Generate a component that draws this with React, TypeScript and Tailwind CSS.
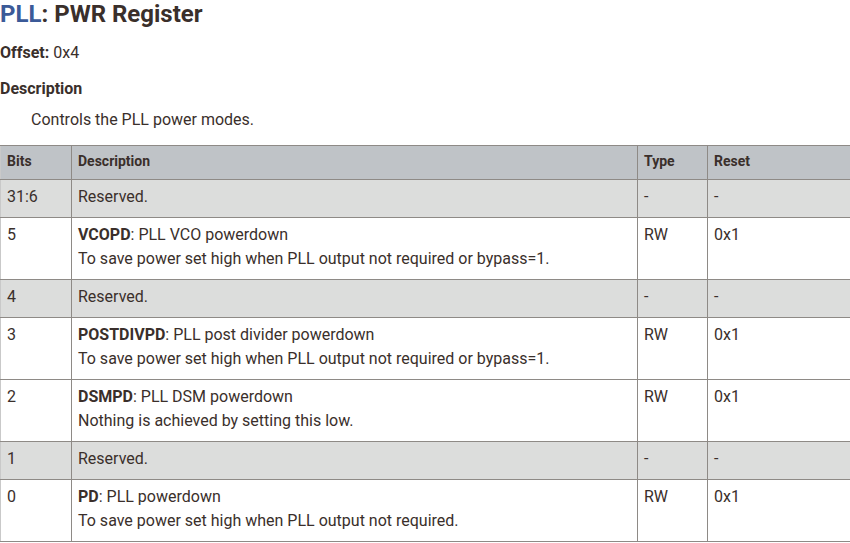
import React from "react";

type Row = {
  bits: string;
  name?: string;
  title: string;
  detail?: string;
  type: string;
  reset: string;
  reserved?: boolean;
};

const rows: Row[] = [
  { bits: "31:6", title: "Reserved.", type: "-", reset: "-", reserved: true },
  {
    bits: "5",
    name: "VCOPD",
    title: ": PLL VCO powerdown",
    detail: "To save power set high when PLL output not required or bypass=1.",
    type: "RW",
    reset: "0x1",
  },
  { bits: "4", title: "Reserved.", type: "-", reset: "-", reserved: true },
  {
    bits: "3",
    name: "POSTDIVPD",
    title: ": PLL post divider powerdown",
    detail: "To save power set high when PLL output not required or bypass=1.",
    type: "RW",
    reset: "0x1",
  },
  {
    bits: "2",
    name: "DSMPD",
    title: ": PLL DSM powerdown",
    detail: "Nothing is achieved by setting this low.",
    type: "RW",
    reset: "0x1",
  },
  { bits: "1", title: "Reserved.", type: "-", reset: "-", reserved: true },
  {
    bits: "0",
    name: "PD",
    title: ": PLL powerdown",
    detail: "To save power set high when PLL output not required.",
    type: "RW",
    reset: "0x1",
  },
];

export default function App() {
  return (
    <div
      className="w-[850px] h-[543px] overflow-hidden bg-white text-[#3a2f2b]"
      style={{ fontFamily: "Roboto, 'Liberation Sans', sans-serif" }}
    >
      <h1 className="text-[24px] font-bold leading-[28px]">
        <span className="text-[#3b5a98]">PLL</span>: PWR Register
      </h1>
      <div className="mt-[15px] text-[16px] leading-[20px]">
        <span className="font-bold">Offset:</span> 0x4
      </div>
      <div className="mt-[16px] text-[16px] leading-[20px] font-bold">Description</div>
      <div className="mt-[11px] pl-[31px] text-[16px] leading-[20px]">
        Controls the PLL power modes.
      </div>
      <table className="mt-[15px] border-collapse text-left w-[850px] table-fixed">
        <colgroup>
          <col className="w-[71px]" />
          <col className="w-[566px]" />
          <col className="w-[70px]" />
          <col className="w-[143px]" />
        </colgroup>
        <thead>
          <tr className="bg-[#bfc3c7]">
            <th className="border border-[#8e8a86] border-l-[#c9c9c9] px-[6px] pt-[5px] pb-[7px] text-[14px] leading-[21px] font-bold align-top">
              Bits
            </th>
            <th className="border border-[#8e8a86] px-[6px] pt-[5px] pb-[7px] text-[14px] leading-[21px] font-bold align-top">
              Description
            </th>
            <th className="border border-[#8e8a86] px-[6px] pt-[5px] pb-[7px] text-[14px] leading-[21px] font-bold align-top">
              Type
            </th>
            <th className="border border-[#8e8a86] px-[6px] pt-[5px] pb-[7px] text-[14px] leading-[21px] font-bold align-top">
              Reset
            </th>
          </tr>
        </thead>
        <tbody className="text-[16px] leading-[24px]">
          {rows.map((r, i) => (
            <tr key={i} className={r.reserved ? "bg-[#dcdddc]" : "bg-white"}>
              <td className="border border-[#8e8a86] border-l-[#c9c9c9] px-[6px] pt-[5px] pb-[8px] align-top">
                {r.bits}
              </td>
              <td className="border border-[#8e8a86] px-[6px] pt-[5px] pb-[8px] align-top">
                <div>
                  {r.name && <span className="font-bold">{r.name}</span>}
                  {r.title}
                </div>
                {r.detail && <div>{r.detail}</div>}
              </td>
              <td className="border border-[#8e8a86] px-[6px] pt-[5px] pb-[8px] align-top">
                {r.type}
              </td>
              <td className="border border-[#8e8a86] px-[6px] pt-[5px] pb-[8px] align-top">
                {r.reset}
              </td>
            </tr>
          ))}
        </tbody>
      </table>
    </div>
  );
}
